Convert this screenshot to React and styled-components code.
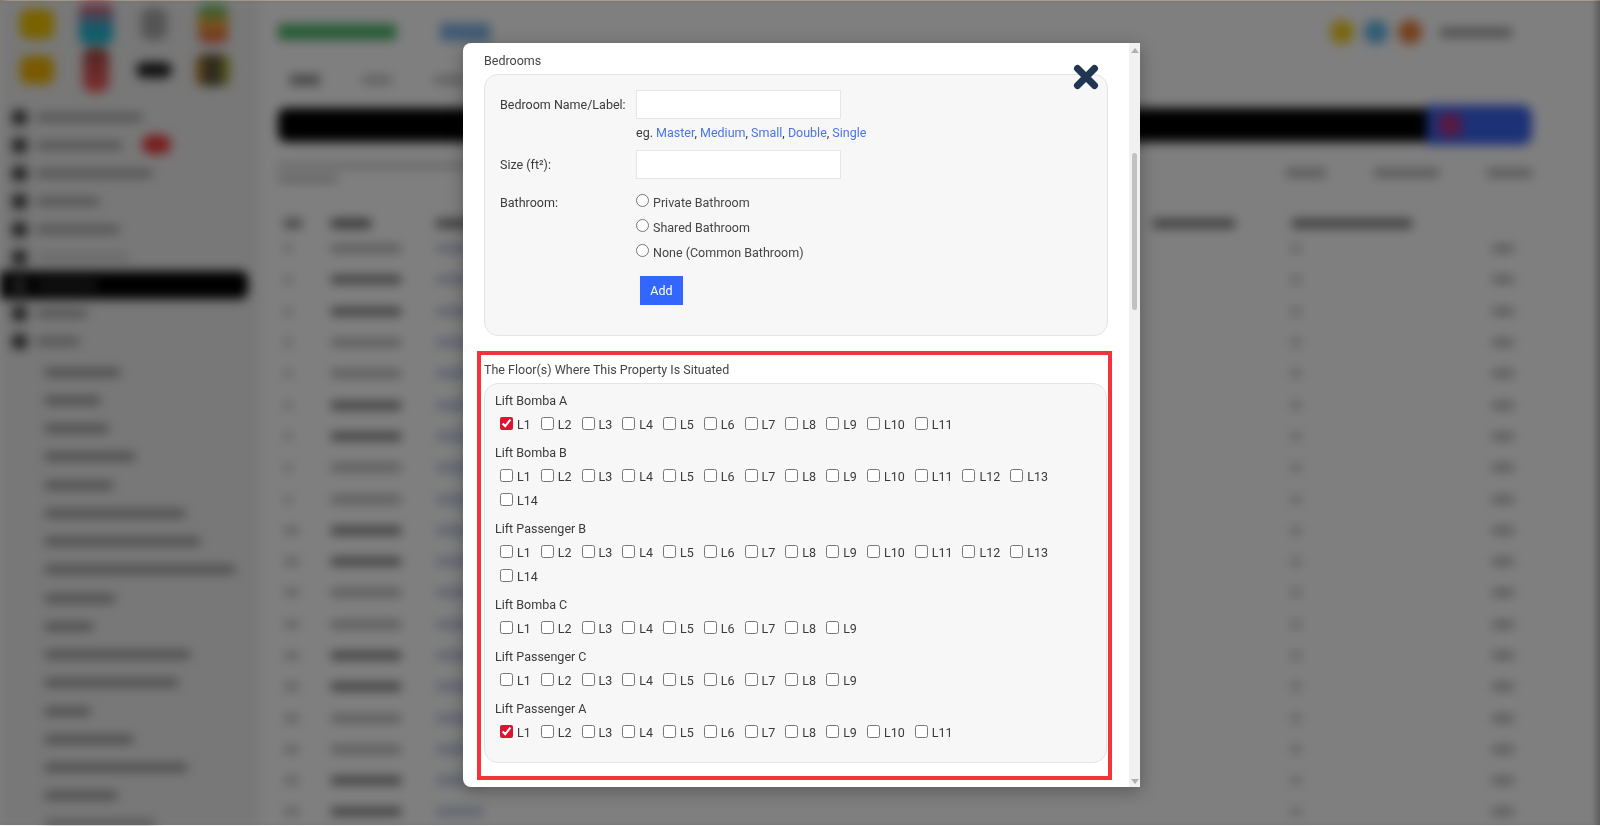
import React from "react";
import styled, { createGlobalStyle } from "styled-components";

const Global = createGlobalStyle`
  html, body { margin: 0; padding: 0; height: 100%; overflow: hidden; background: #fff; }
  body { font-family: Roboto, "Liberation Sans", sans-serif; }
  * { box-sizing: border-box; }
`;

/* ---------- blurred page behind the dialog ---------- */
const Viewport = styled.div`
  width: 1600px; height: 826px; position: relative; overflow: hidden; background: #fff;
  display: flex; flex-direction: column;
`;
const TopStrip = styled.div`height: 1px; background: #5e4c32; flex: none;`;
const Blurred = styled.div`
  flex: 1; display: flex; filter: blur(5.5px); min-height: 0; background: #fff;
`;
const Sidebar = styled.aside`width: 260px; flex: none; background: #f0f0f0; overflow: hidden;`;
const IconGrid = styled.div`
  display: grid; grid-template-columns: repeat(4, 58.5px); grid-auto-rows: 46px;
  padding-left: 8px; justify-items: center; align-items: center;
`;
const AppIcon = styled.div`
  width: ${p => p.$w || 30}px; height: ${p => p.$h || 26}px; border-radius: 8px;
  background: ${p => p.$bg};
`;
const Nav = styled.nav`margin-top: 10px;`;
const NavRow = styled.div`
  height: 28px; display: flex; align-items: center; gap: 10px; padding-left: 12px;
  width: 248px; position: relative;
  background: ${p => p.$active ? "#000" : "transparent"};
  border-radius: 0 8px 8px 0;
`;
const NavDot = styled.span`width: 15px; height: 15px; border-radius: 4px; background: #444; flex: none;`;
const Bar = styled.span`
  display: block; flex: none; width: ${p => p.$w}px; height: ${p => p.$h || 8}px;
  background: ${p => p.$c || "#555"}; margin-left: ${p => p.$ml || 0}px;
`;
const Badge = styled.span`
  position: absolute; left: 142px; top: 4px; width: 29px; height: 19px; border-radius: 9px; background: #f03a3a;
`;
const SubRow = styled.div`height: 28.25px; display: flex; align-items: center; padding-left: 45px;`;
const SubList = styled.div`margin-top: 3px;`;

const Main = styled.main`flex: 1; padding: 0 68px 0 18px; min-width: 0; overflow: hidden;`;
const Header = styled.header`height: 62px; display: flex; align-items: center; gap: 44px;`;
const HeaderRight = styled.div`margin-left: auto; display: flex; align-items: center; gap: 10px; margin-right: 20px;`;
const Round = styled.span`width: 24px; height: 24px; border-radius: 50%; background: ${p => p.$bg}; display: block;`;
const Tabs = styled.div`height: 34px; display: flex; align-items: center; gap: 42px; padding-left: 12px;`;
const Toolbar = styled.div`margin-top: 8px; height: 40px; display: flex; align-items: center;`;
const BlackBar = styled.div`flex: 1; height: 34px; background: #000; border-radius: 8px 0 0 8px;`;
const BlueButton = styled.div`
  width: 105px; height: 40px; background: #3a62ee; border-radius: 0 10px 10px 0;
  display: flex; align-items: center; padding-left: 12px;
`;
const Pink = styled.span`width: 22px; height: 22px; background: #b43280; display: block;`;
const Info = styled.div`height: 68px; display: flex; justify-content: space-between; padding-top: 18px;`;
const InfoLeft = styled.div`display: flex; flex-direction: column; gap: 7px;`;
const InfoRight = styled.div`display: flex; gap: 48px; padding-top: 6px;`;
const TableHead = styled.div`
  display: grid; grid-template-columns: 47px 105px 717px 139px 1fr; height: 20px; align-items: center; padding-left: 6px;
`;
const TableRow = styled.div`
  display: grid; grid-template-columns: 47px 105px 855px 1fr 40px; height: 31.3px; align-items: center; padding-left: 6px;
`;

const MiniBar = styled(Bar)`height: 7px;`;

const icons = [
  ["#f2c400", 34, 30], ["linear-gradient(#ff5a7a,#22b9d6 60%,#22b9d6)", 34, 42], ["#a9a9a9", 26, 32], ["linear-gradient(#47c26a,#f4a63a 50%,#e65a4a)", 30, 38],
  ["#f2b400", 34, 28], ["linear-gradient(#a04a4a,#ff5b5b)", 26, 44], ["#222", 36, 16], ["linear-gradient(90deg,#c98a20,#444 50%,#bdbd30)", 34, 32],
];
const nav = [105, 85, 115, 62, 82, 92];
const sub = [75, 55, 63, 90, 68, 140, 155, 190, 70, 48, 145, 133, 45, 88, 142, 72, 110];

/* ---------- dialog ---------- */
const Overlay = styled.div`
  position: absolute; left: 0; right: 0; top: 1px; bottom: 1px; background: rgba(0, 0, 0, 0.5);
  box-shadow: inset -7px 0 6px -3px rgba(0,0,0,.28);
`;
const Dialog = styled.div`
  position: absolute; left: 463px; top: 43px; width: 677px; height: 744px; background: #fff;
  border-radius: 8px 0 0 8px; display: flex; overflow: hidden;
  box-shadow: 0 4px 18px rgba(0,0,0,.3);
  color: #444; font-size: 12.5px; line-height: 16px;
`;
const DialogBody = styled.div`flex: 1; padding: 10px 21px 0 21px; min-width: 0; filter: blur(0.3px);`;
const Scrollbar = styled.div`
  width: 11px; flex: none; background: #f1f1f1; display: flex; flex-direction: column; align-items: center;
  padding: 5px 0 3px;
`;
const ArrowUp = styled.span`width: 0; height: 0; border: 4px solid transparent; border-top: 0; border-bottom: 5px solid #b0b0b0;`;
const ArrowDown = styled.span`width: 0; height: 0; border: 4px solid transparent; border-bottom: 0; border-top: 5px solid #b0b0b0; margin-top: auto;`;
const Thumb = styled.span`width: 5px; height: 157px; border-radius: 3px; background: #c1c1c1; margin-top: 100px;`;

const CloseButton = styled.button`
  position: absolute; left: 608px; top: 19px; width: 30px; height: 30px; padding: 0; border: 0; background: none;
  display: flex; align-items: center; justify-content: center;
`;
const SectionTitle = styled.div`height: 16px;`;
const Panel = styled.div`
  background: #f7f7f7; border: 1px solid #e4e4e4; border-radius: 14px;
`;
const BedroomPanel = styled(Panel)`
  margin-top: 5px; height: 262px; padding: 15px 15px 0; display: grid;
  grid-template-columns: 136px 205px; align-content: start;
`;
const FieldLabel = styled.label`display: flex; align-items: center; height: 29px; color: #3a3a3a;`;
const TextInput = styled.input`
  width: 205px; height: 29px; background: #fff; border: 1px solid #e6e6e6; padding: 0 6px; outline: none;
`;
const Spacer = styled.div``;
const Hint = styled.div`height: 31px; padding-top: 6px; white-space: nowrap; color: #3a3a3a;`;
const HintLink = styled.a`color: #4a74e8; text-decoration: none;`;
const BathLabel = styled(FieldLabel)`margin-top: 10px; height: 25px; padding-top: 3px;`;
const RadioList = styled.div`margin-top: 11px; display: flex; flex-direction: column;`;
const RadioRow = styled.label`height: 25px; display: flex; align-items: center; gap: 4px; white-space: nowrap;`;
const Radio = styled.input`
  width: 13px; height: 13px; margin: 0 0 5px; flex: none;
`;
const AddButton = styled.button`
  margin: 11px 0 0 4px; width: 43px; height: 29px; background: #3366ff; color: #fff; border: 0; padding: 0;
  font: inherit; display: block;
`;
const Highlight = styled.section`
  margin: 15px -4px 0 -7px; height: 429px; border: 4px solid #f5333a; padding: 7px 1px 0 3px;
`;
const FloorPanel = styled(Panel)`margin-top: 5px; height: 380px; padding: 5px 12px 0 10px;`;
const Group = styled.div`margin-bottom: 4px;`;
const GroupName = styled.div`height: 24px; display: flex; align-items: center; color: #3a3a3a;`;
const Floors = styled.div`display: flex; flex-wrap: wrap; column-gap: 10px; padding-left: 5px;`;
const Floor = styled.label`height: 24px; display: inline-flex; align-items: center; gap: 4px; color: #3a3a3a;`;
const Check = styled.input`
  width: 13px; height: 13px; margin: 0 0 3px; flex: none; accent-color: #dc1430;
`;

const groups = [
  ["Lift Bomba A", 11, true],
  ["Lift Bomba B", 14, false],
  ["Lift Passenger B", 14, false],
  ["Lift Bomba C", 9, false],
  ["Lift Passenger C", 9, false],
  ["Lift Passenger A", 11, true],
];

const examples = ["Master", "Medium", "Small", "Double", "Single"];
const baths = ["Private Bathroom", "Shared Bathroom", "None (Common Bathroom)"];

export default function App() {
  return (
    <Viewport>
      <Global />
      <TopStrip />
      <Blurred aria-hidden="true">
        <Sidebar>
          <IconGrid>
            {icons.map(([bg, w, h], i) => <AppIcon key={i} $bg={bg} $w={w} $h={h} />)}
          </IconGrid>
          <Nav>
            {nav.map((w, i) => (
              <NavRow key={i}>
                <NavDot />
                <Bar $w={w} $h={7} $c={i === 5 ? "#ccc" : "#999"} />
                {i === 1 && <Badge />}
              </NavRow>
            ))}
            <NavRow $active><NavDot /><Bar $w={60} $c="#333" /></NavRow>
            <NavRow><NavDot /><Bar $w={50} $h={7} $c="#999" /></NavRow>
            <NavRow><NavDot /><Bar $w={42} $h={7} $c="#999" /></NavRow>
          </Nav>
          <SubList>
            {sub.map((w, i) => <SubRow key={i}><Bar $w={w} $h={7} $c="#888" /></SubRow>)}
          </SubList>
        </Sidebar>
        <Main>
          <Header>
            <Bar $w={118} $h={16} $c="#4fb56f" />
            <Bar $w={50} $h={18} $c="#7fb5e8" />
            <HeaderRight>
              <Round $bg="#f4cc20" />
              <Round $bg="#62b8e8" />
              <Round $bg="#e8803a" />
              <Bar $w={72} $h={9} $c="#999" $ml={8} />
            </HeaderRight>
          </Header>
          <Tabs>
            <Bar $w={30} $h={10} $c="#888" />
            <Bar $w={30} $h={8} $c="#bbb" />
            <Bar $w={34} $h={8} $c="#bbb" />
          </Tabs>
          <Toolbar>
            <BlackBar />
            <BlueButton><Pink /></BlueButton>
          </Toolbar>
          <Info>
            <InfoLeft>
              <Bar $w={310} $h={6} $c="#ccc" />
              <Bar $w={60} $h={6} $c="#bbb" />
            </InfoLeft>
            <InfoRight>
              <Bar $w={40} $h={8} $c="#aaa" />
              <Bar $w={65} $h={8} $c="#aaa" />
              <Bar $w={45} $h={8} $c="#aaa" />
            </InfoRight>
          </Info>
          <TableHead>
            <Bar $w={18} $h={9} $c="#888" />
            <Bar $w={40} $h={9} $c="#666" />
            <Bar $w={40} $h={9} $c="#777" />
            <Bar $w={82} $h={9} $c="#777" />
            <Bar $w={120} $h={9} $c="#777" />
          </TableHead>
          {Array.from({ length: 19 }, (_, i) => {
            const dark = i % 4 === 1 || i % 4 === 2;
            return (
              <TableRow key={i}>
                <MiniBar $w={i > 8 ? 15 : 8} $c="#bbb" />
                <MiniBar $w={70} $c={dark ? "#666" : "#aaa"} />
                <MiniBar $w={48} $c="#b4bee0" />
                <MiniBar $w={10} $c="#bbb" />
                <MiniBar $w={22} $c="#aaa" />
              </TableRow>
            );
          })}
        </Main>
      </Blurred>
      <Overlay />
      <Dialog>
        <DialogBody>
          <SectionTitle>Bedrooms</SectionTitle>
          <BedroomPanel>
            <FieldLabel>Bedroom Name/Label:</FieldLabel>
            <TextInput type="text" />
            <Spacer />
            <Hint>
              eg.{" "}
              {examples.map((e, i) => (
                <React.Fragment key={e}>
                  <HintLink href="#">{e}</HintLink>
                  {i < examples.length - 1 ? ", " : ""}
                </React.Fragment>
              ))}
            </Hint>
            <FieldLabel>Size (ft²):</FieldLabel>
            <TextInput type="text" />
            <BathLabel>Bathroom:</BathLabel>
            <RadioList>
              {baths.map(b => (
                <RadioRow key={b}><Radio type="radio" name="bath" />{b}</RadioRow>
              ))}
              <AddButton type="button">Add</AddButton>
            </RadioList>
          </BedroomPanel>
          <Highlight>
            <SectionTitle>The Floor(s) Where This Property Is Situated</SectionTitle>
            <FloorPanel>
              {groups.map(([name, count, first]) => (
                <Group key={name}>
                  <GroupName>{name}</GroupName>
                  <Floors>
                    {Array.from({ length: count }, (_, i) => (
                      <Floor key={i}>
                        <Check type="checkbox" defaultChecked={first && i === 0} />L{i + 1}
                      </Floor>
                    ))}
                  </Floors>
                </Group>
              ))}
            </FloorPanel>
          </Highlight>
        </DialogBody>
        <Scrollbar>
          <ArrowUp />
          <Thumb />
          <ArrowDown />
        </Scrollbar>
        <CloseButton type="button" aria-label="Close">
          <svg width="30" height="30" viewBox="0 0 30 30">
            <path d="M6.5 6.5 L23.5 23.5 M23.5 6.5 L6.5 23.5" stroke="#1f3552" strokeWidth="7" strokeLinecap="round" fill="none" />
          </svg>
        </CloseButton>
      </Dialog>
    </Viewport>
  );
}
